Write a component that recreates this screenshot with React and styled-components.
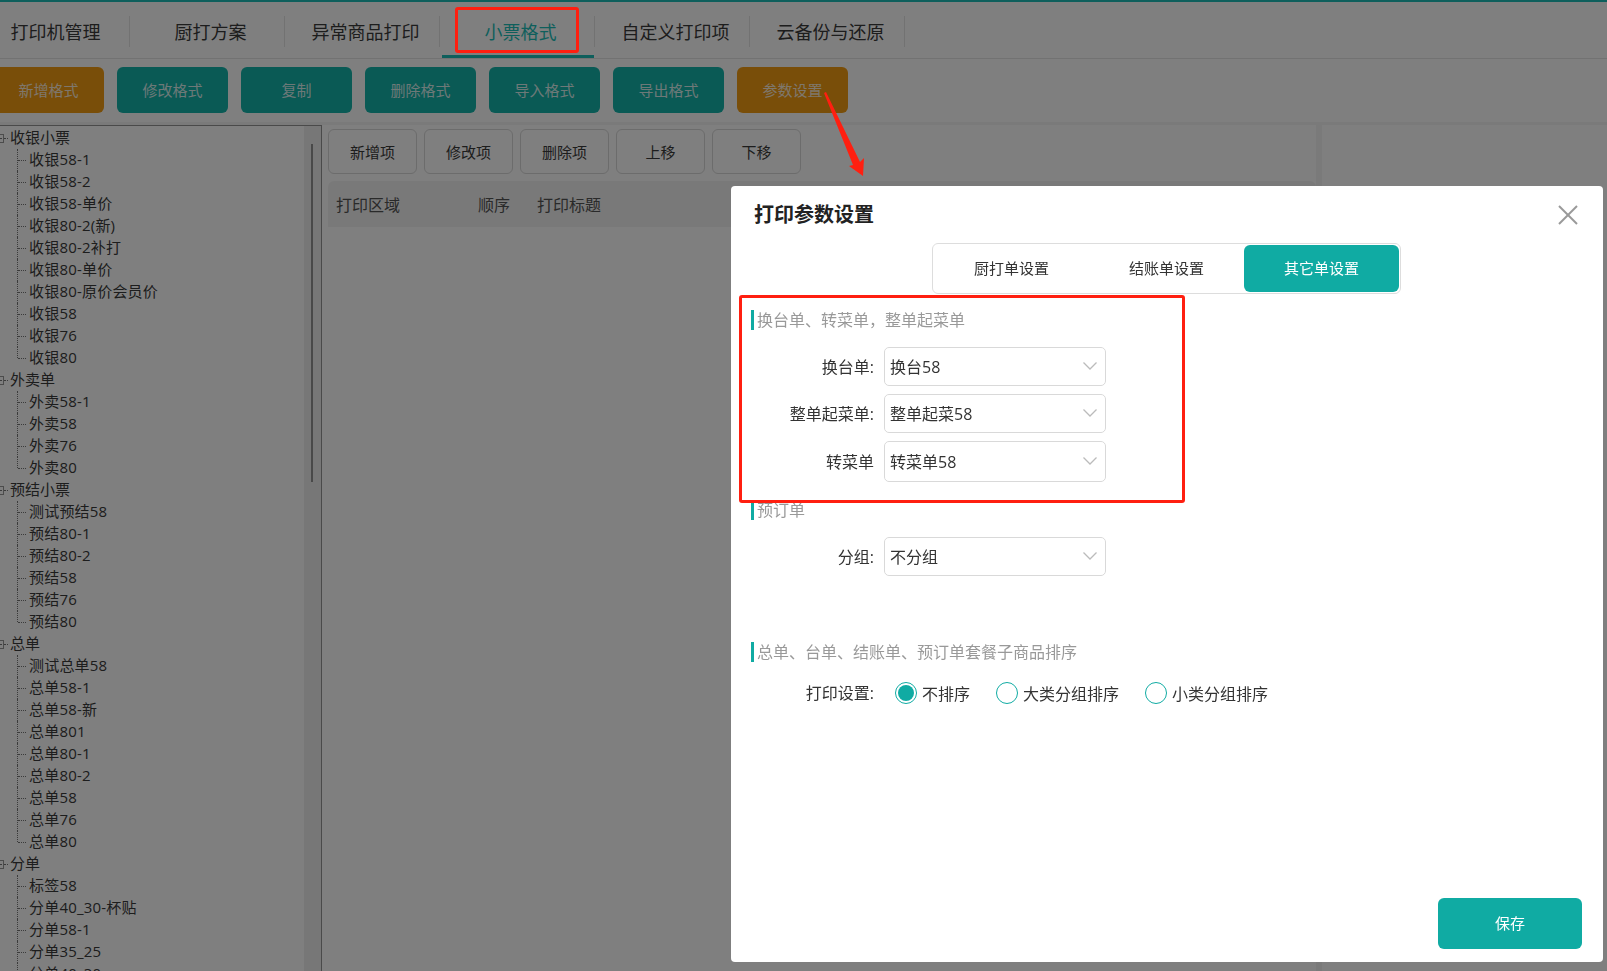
import React from 'react';
import styled, { createGlobalStyle } from 'styled-components';

const TEAL = '#10aba3';

const GlobalStyle = createGlobalStyle`
  html, body { margin: 0; padding: 0; height: 100%; overflow: hidden; background: #fff; }
  * { box-sizing: border-box; }
  body { font-family: "Open Sans", "Noto Sans CJK SC", sans-serif; color: #3a3a3a; }
`;

const Page = styled.div`
  height: 971px;
  display: flex;
  flex-direction: column;
  overflow: hidden;
  border-top: 2px solid #1cbeb8;
`;

const TabBar = styled.div`
  flex: none;
  height: 57px;
  display: flex;
  align-items: flex-start;
  padding-top: 14px;
  margin-left: -25px;
  border-bottom: 1px solid #e4e4e4;
`;

const Tab = styled.div`
  position: relative;
  width: 155px;
  height: 31px;
  padding: 0 0 2px 7px;
  display: flex;
  align-items: center;
  justify-content: center;
  font-size: 18px;
  color: ${(p) => (p.$active ? '#1cbeb8' : '#3a3a3a')};
  border-right: 1px solid #e4e4e4;
  ${(p) => p.$active && `
    &::after {
      content: '';
      position: absolute;
      left: 2px;
      right: 0;
      bottom: -11px;
      height: 3px;
      background: #1cbeb8;
    }
  `}
`;

const ActionBar = styled.div`
  flex: none;
  height: 63px;
  display: flex;
  gap: 13px;
  padding-top: 8px;
  margin-left: -7px;
`;

const ActionButton = styled.button`
  width: 111px;
  height: 46px;
  padding: 0 0 2px;
  border: 0;
  border-radius: 6px;
  font: inherit;
  font-size: 15px;
  color: rgba(255, 255, 255, 0.85);
  background: ${(p) => (p.$warn ? '#f39c12' : '#14b4aa')};
`;

const Main = styled.div`
  flex: 1;
  min-height: 0;
  display: flex;
  border-top: 3px solid #f4f4f4;
`;

const TreePanel = styled.div`
  flex: none;
  width: 322px;
  display: flex;
  border-top: 1px solid #949494;
  border-right: 1px solid #949494;
`;

const Tree = styled.div`
  flex: 1;
  padding-top: 1px;
  overflow: hidden;
`;

const ScrollTrack = styled.div`
  flex: none;
  width: 17px;
  padding: 18px 0 0 7px;
  background: #eeeeee;
`;

const ScrollThumb = styled.div`
  width: 2px;
  height: 338px;
  background: #929292;
`;

const RootRow = styled.div`
  position: relative;
  height: 22px;
  padding-left: 10px;
  font-size: 15px;
  line-height: 21px;
  white-space: nowrap;
  &::after {
    content: '';
    position: absolute;
    left: 4px;
    top: 11px;
    width: 4px;
    border-top: 1px dotted #777;
  }
`;

const Expander = styled.span`
  position: absolute;
  left: -5px;
  top: 7px;
  width: 9px;
  height: 9px;
  border: 1px solid #999;
  &::after {
    content: '';
    position: absolute;
    left: 1px;
    right: 1px;
    top: 3px;
    border-top: 1px solid #777;
  }
`;

const ChildRow = styled.div`
  position: relative;
  height: 22px;
  padding-left: 29px;
  font-size: 15px;
  line-height: 21px;
  letter-spacing: 0.2px;
  white-space: nowrap;
  &::before {
    content: '';
    position: absolute;
    left: 17px;
    top: 0;
    height: ${(p) => (p.$last ? '11px' : '22px')};
    border-left: 1px dotted #777;
  }
  &::after {
    content: '';
    position: absolute;
    left: 18px;
    top: 11px;
    width: 8px;
    border-top: 1px dotted #777;
  }
`;

const Work = styled.div`
  flex: none;
  width: 1000px;
  padding: 4px 0 0 6px;
  border-right: 6px solid #f4f4f4;
`;

const ItemBar = styled.div`
  display: flex;
  gap: 7px;
`;

const ItemButton = styled.button`
  width: 89px;
  height: 45px;
  background: #fff;
  border: 1px solid #d8d8d8;
  border-radius: 6px;
  font: inherit;
  font-size: 15px;
  color: #3a3a3a;
`;

const TableHead = styled.div`
  height: 46px;
  margin-top: 7px;
  padding-left: 8px;
  display: flex;
  align-items: center;
  background: #f3f3f3;
  border-radius: 6px 6px 0 0;
  font-size: 16px;
  color: #555;
`;

const HeadCell = styled.div`
  width: ${(p) => p.$w}px;
`;

const Overlay = styled.div`
  position: fixed;
  inset: 0;
  background: rgba(0, 0, 0, 0.5);
`;

const Modal = styled.div`
  position: fixed;
  left: 731px;
  top: 186px;
  width: 872px;
  height: 776px;
  display: flex;
  flex-direction: column;
  background: #fff;
  border-radius: 4px;
`;

const ModalHeader = styled.div`
  flex: none;
  height: 57px;
  padding: 1px 25px 0 23px;
  display: flex;
  align-items: center;
  justify-content: space-between;
`;

const ModalTitle = styled.div`
  padding-bottom: 3px;
  font-size: 20px;
  font-weight: 700;
  color: #222;
`;

const CloseIcon = styled.svg`
  display: block;
  width: 20px;
  height: 20px;
  stroke: #999;
  stroke-width: 2;
`;

const Segmented = styled.div`
  flex: none;
  display: flex;
  width: 469px;
  height: 51px;
  margin-left: 201px;
  padding: 1px;
  border: 1px solid #dddddd;
  border-radius: 6px;
`;

const Segment = styled.div`
  width: 155px;
  padding-bottom: 2px;
  display: flex;
  align-items: center;
  justify-content: center;
  font-size: 15px;
  border-radius: 6px;
  color: ${(p) => (p.$active ? '#fff' : '#333')};
  background: ${(p) => (p.$active ? TEAL : 'transparent')};
`;

const Section = styled.section`
  flex: none;
  margin: ${(p) => p.$top}px 0 0 20px;
`;

const SectionTitle = styled.div`
  height: 20px;
  padding-left: 3px;
  border-left: 3px solid ${TEAL};
  font-size: 16px;
  line-height: 20px;
  color: #999;
`;

const Fields = styled.div`
  display: flex;
  flex-direction: column;
  gap: 8px;
  margin-top: 17px;
`;

const Field = styled.div`
  display: flex;
  align-items: center;
  gap: 10px;
`;

const Label = styled.div`
  width: 123px;
  padding-bottom: 2px;
  text-align: right;
  font-size: 16px;
  color: #333;
`;

const Select = styled.div`
  width: 222px;
  height: ${(p) => (p.$tall ? 41 : 39)}px;
  padding: 0 8px 2px 5px;
  display: flex;
  align-items: center;
  justify-content: space-between;
  border: 1px solid #d9d9d9;
  border-radius: 5px;
  font-size: 16px;
  color: #333;
`;

const Chevron = styled.svg`
  width: 14px;
  height: 8px;
  fill: none;
  stroke: #bbb;
  stroke-width: 1.3;
`;

const RadioRow = styled(Field)`
  height: 22px;
  margin-top: 20px;
`;

const RadioGroup = styled.div`
  display: flex;
  gap: 26px;
  padding-left: 11px;
`;

const RadioItem = styled.label`
  display: flex;
  align-items: center;
  gap: 5px;
  height: 22px;
  font-size: 16px;
  color: #333;
`;

const RadioMark = styled.span`
  width: 22px;
  height: 22px;
  padding: 2px;
  border: 1px solid ${TEAL};
  border-radius: 50%;
  &::before {
    content: '';
    display: ${(p) => (p.$on ? 'block' : 'none')};
    width: 16px;
    height: 16px;
    border-radius: 50%;
    background: ${TEAL};
  }
`;

const ModalFooter = styled.div`
  margin-top: auto;
  padding: 0 21px 13px 0;
  display: flex;
  justify-content: flex-end;
`;

const SaveButton = styled.button`
  width: 144px;
  height: 51px;
  padding: 0 0 3px;
  border: 0;
  border-radius: 6px;
  background: ${TEAL};
  color: #fff;
  font: inherit;
  font-size: 15px;
`;

const RedBox = styled.div`
  position: fixed;
  left: ${(p) => p.$x}px;
  top: ${(p) => p.$y}px;
  width: ${(p) => p.$w}px;
  height: ${(p) => p.$h}px;
  border: 3px solid #ff1f10;
  border-radius: 3px;
`;

const RedArrow = styled.svg`
  position: fixed;
  left: 820px;
  top: 90px;
  width: 50px;
  height: 90px;
  fill: #ff1f10;
`;

const tabs = ['打印机管理', '厨打方案', '异常商品打印', '小票格式', '自定义打印项', '云备份与还原'];
const actions = ['新增格式', '修改格式', '复制', '删除格式', '导入格式', '导出格式', '参数设置'];
const items = ['新增项', '修改项', '删除项', '上移', '下移'];

const tree = [
  ['收银小票', ['收银58-1', '收银58-2', '收银58-单价', '收银80-2(新)', '收银80-2补打', '收银80-单价', '收银80-原价会员价', '收银58', '收银76', '收银80']],
  ['外卖单', ['外卖58-1', '外卖58', '外卖76', '外卖80']],
  ['预结小票', ['测试预结58', '预结80-1', '预结80-2', '预结58', '预结76', '预结80']],
  ['总单', ['测试总单58', '总单58-1', '总单58-新', '总单801', '总单80-1', '总单80-2', '总单58', '总单76', '总单80']],
  ['分单', ['标签58', '分单40_30-杯贴', '分单58-1', '分单35_25', '分单40_30']],
];

function Dropdown({ value, tall }) {
  return (
    <Select $tall={tall}>
      {value}
      <Chevron viewBox="0 0 14 8"><polyline points="0.5,0.5 7,7 13.5,0.5" /></Chevron>
    </Select>
  );
}

export default function App() {
  return (
    <>
      <GlobalStyle />
      <Page>
        <TabBar>
          {tabs.map((t) => <Tab key={t} $active={t === '小票格式'}>{t}</Tab>)}
        </TabBar>
        <ActionBar>
          {actions.map((a) => (
            <ActionButton key={a} $warn={a === '新增格式' || a === '参数设置'}>{a}</ActionButton>
          ))}
        </ActionBar>
        <Main>
          <TreePanel>
            <Tree>
              {tree.map(([root, children]) => (
                <div key={root}>
                  <RootRow><Expander />{root}</RootRow>
                  {children.map((c, i) => (
                    <ChildRow key={c} $last={i === children.length - 1}>{c}</ChildRow>
                  ))}
                </div>
              ))}
            </Tree>
            <ScrollTrack><ScrollThumb /></ScrollTrack>
          </TreePanel>
          <Work>
            <ItemBar>
              {items.map((i) => <ItemButton key={i}>{i}</ItemButton>)}
            </ItemBar>
            <TableHead>
              <HeadCell $w={142}>打印区域</HeadCell>
              <HeadCell $w={59}>顺序</HeadCell>
              <HeadCell $w={100}>打印标题</HeadCell>
            </TableHead>
          </Work>
        </Main>
      </Page>

      <Overlay />
      <Modal>
        <ModalHeader>
          <ModalTitle>打印参数设置</ModalTitle>
          <CloseIcon viewBox="0 0 20 20"><line x1="1" y1="1" x2="19" y2="19" /><line x1="19" y1="1" x2="1" y2="19" /></CloseIcon>
        </ModalHeader>
        <Segmented>
          <Segment>厨打单设置</Segment>
          <Segment>结账单设置</Segment>
          <Segment $active>其它单设置</Segment>
        </Segmented>
        <Section $top={16}>
          <SectionTitle>换台单、转菜单，整单起菜单</SectionTitle>
          <Fields>
            <Field><Label>换台单:</Label><Dropdown value="换台58" /></Field>
            <Field><Label>整单起菜单:</Label><Dropdown value="整单起菜58" /></Field>
            <Field><Label>转菜单</Label><Dropdown value="转菜单58" tall /></Field>
          </Fields>
        </Section>
        <Section $top={18}>
          <SectionTitle>预订单</SectionTitle>
          <Fields>
            <Field><Label>分组:</Label><Dropdown value="不分组" /></Field>
          </Fields>
        </Section>
        <Section $top={66}>
          <SectionTitle>总单、台单、结账单、预订单套餐子商品排序</SectionTitle>
          <RadioRow>
            <Label>打印设置:</Label>
            <RadioGroup>
              <RadioItem><RadioMark $on />不排序</RadioItem>
              <RadioItem><RadioMark />大类分组排序</RadioItem>
              <RadioItem><RadioMark />小类分组排序</RadioItem>
            </RadioGroup>
          </RadioRow>
        </Section>
        <ModalFooter><SaveButton>保存</SaveButton></ModalFooter>
      </Modal>

      <RedBox $x={455} $y={7} $w={124} $h={46} />
      <RedBox $x={739} $y={295} $w={446} $h={208} />
      <RedArrow viewBox="0 0 50 90">
        <polygon points="4,3 6,2 40,72 44,68 43,86 29,76 33,75" />
      </RedArrow>
    </>
  );
}
